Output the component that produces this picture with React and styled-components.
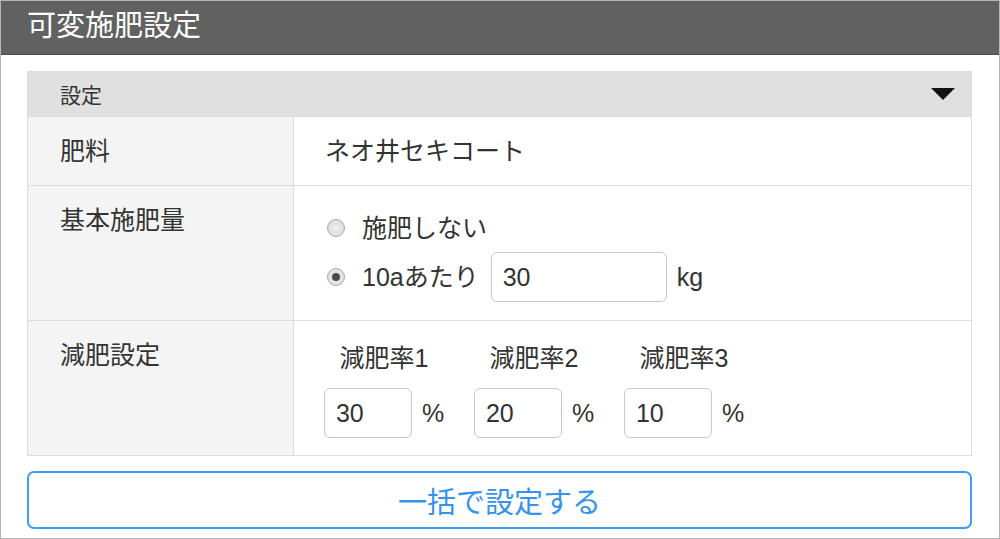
import React from "react"
import styled, { createGlobalStyle } from "styled-components"

const GlobalStyle = createGlobalStyle`
  html, body {
    margin: 0;
    padding: 0;
    background: #fff;
  }
  * {
    box-sizing: border-box;
  }
`

const Frame = styled.div`
  width: 1000px;
  height: 539px;
  border: 1px solid #b4b4b4;
  background: #fff;
  font-family: "Liberation Sans", "Noto Sans CJK JP", sans-serif;
  color: #333;
  overflow: hidden;
`

const Header = styled.div`
  height: 54px;
  background: #616161;
  border-bottom: 1px solid #4c4c4c;
  color: #fff;
  font-size: 29px;
  line-height: 50px;
  padding-left: 26px;
`

const Body = styled.div`
  padding: 16px 27px 0 26px;
`

const Table = styled.div`
  border: 1px solid #dcdcdc;
  display: grid;
  grid-template-columns: 266px 1fr;
`

const Section = styled.div`
  grid-column: 1 / -1;
  height: 44px;
  background: #e0e0e0;
  display: flex;
  align-items: center;
  justify-content: space-between;
  padding: 0 16px 0 32px;
  font-size: 21px;
`

const Caret = styled.span`
  width: 0;
  height: 0;
  border-left: 12px solid transparent;
  border-right: 12px solid transparent;
  border-top: 12px solid #111;
`

const Label = styled.div`
  height: ${p => p.h}px;
  background: #f4f4f4;
  border-top: 1px solid #dcdcdc;
  border-right: 1px solid #dcdcdc;
  padding: 20px 32px;
  font-size: 25px;
  line-height: 28px;
`

const Value = styled.div`
  height: ${p => p.h}px;
  border-top: 1px solid #dcdcdc;
  padding: ${p => p.pad || "20px"} 31px 0;
  font-size: 25px;
  line-height: 28px;
  display: flex;
  flex-direction: column;
  gap: ${p => p.gap || 0}px;
`

const RadioLine = styled.label`
  display: flex;
  align-items: center;
  height: ${p => p.h}px;
  gap: 17px;
`

const Radio = styled.input.attrs({ type: "radio" })`
  appearance: none;
  margin: 0 0 0 2px;
  width: 18px;
  height: 18px;
  border-radius: 50%;
  border: 1px solid #aaa;
  background: radial-gradient(circle, #eeeeee 0%, #d8d8d8 100%);
  position: relative;
  flex: none;

  &:checked::after {
    content: "";
    position: absolute;
    left: 4px;
    top: 4px;
    width: 8px;
    height: 8px;
    border-radius: 50%;
    background: #4a4a4a;
  }
`

const Inline = styled.span`
  display: flex;
  align-items: center;
  gap: ${p => p.gap}px;
`

const Lead = styled.span`
  margin-right: 2px;
`

const TextBox = styled.input.attrs({ type: "text" })`
  width: ${p => p.w}px;
  height: 50px;
  border: 1px solid #c8c8c8;
  border-radius: 6px;
  padding: 0 11px;
  font-family: inherit;
  font-size: 25px;
  color: #333;
  background: #fff;
  outline: none;
`

const RateGroups = styled.div`
  display: flex;
  gap: 32px;
`

const Rate = styled.div`
  display: flex;
  flex-direction: column;
  align-items: center;
  gap: 15px;
  width: 118px;
  line-height: 30px;
`

const Unit = styled.span`
  font-size: 25px;
`

const Button = styled.button`
  margin-top: 15px;
  width: 100%;
  height: 58px;
  border: 2px solid #3d9cf5;
  border-radius: 7px;
  background: #fff;
  color: #3593ee;
  font-family: inherit;
  font-size: 29px;
  cursor: pointer;
`

const rates = [
  { label: "減肥率1", value: "30" },
  { label: "減肥率2", value: "20" },
  { label: "減肥率3", value: "10" },
]

const App = () => {
  return (
    <Frame>
      <GlobalStyle />
      <Header>可変施肥設定</Header>
      <Body>
        <Table>
          <Section>
            設定
            <Caret />
          </Section>

          <Label h={69}>肥料</Label>
          <Value h={69}>ネオ井セキコート</Value>

          <Label h={135}>基本施肥量</Label>
          <Value h={135} pad="24px" gap={6}>
            <RadioLine h={36}>
              <Radio name="base" />
              施肥しない
            </RadioLine>
            <RadioLine h={50}>
              <Radio name="base" defaultChecked />
              <Inline gap={10}>
                <Lead>10aあたり</Lead>
                <TextBox w={176} defaultValue="30" />
                <Unit>kg</Unit>
              </Inline>
            </RadioLine>
          </Value>

          <Label h={135}>減肥設定</Label>
          <Value h={135} pad="22px">
            <RateGroups>
              {rates.map(r => (
                <Rate key={r.label}>
                  <span>{r.label}</span>
                  <Inline gap={10}>
                    <TextBox w={88} defaultValue={r.value} />
                    <Unit>%</Unit>
                  </Inline>
                </Rate>
              ))}
            </RateGroups>
          </Value>
        </Table>
        <Button>一括で設定する</Button>
      </Body>
    </Frame>
  )
}

export default App
